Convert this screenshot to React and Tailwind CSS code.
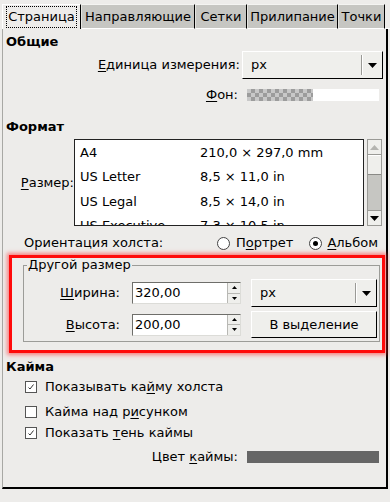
import React from "react";

const font = { fontFamily: '"DejaVu Sans", "Liberation Sans", sans-serif' };

const U = ({ children }) => <span className="underline underline-offset-[2px] decoration-1">{children}</span>;

const Arrow = ({ up, color = "#000" }) => (
  <svg width="9" height="5" viewBox="0 0 9 5">
    <polygon points={up ? "0,5 9,5 4.5,0" : "0,0 9,0 4.5,5"} fill={color} />
  </svg>
);

const Combo = ({ children, w, h = 28 }) => (
  <div
    className={`flex items-center bg-[#efefec] border border-t-white border-l-white border-r-black border-b-black ${w}`}
    style={{ height: h }}
  >
    <span className="pl-[8px] flex-1">{children}</span>
    <div className="h-[20px] w-[2px] border-l border-l-[#9a9a96] border-r border-r-white" />
    <div className="px-[5px] flex items-center">
      <Arrow />
    </div>
  </div>
);

const Spin = ({ value }) => (
  <div className="flex h-[22px] w-[109px] bg-white border border-t-[#6e6e6a] border-l-[#6e6e6a] border-r-[#dcdcd8] border-b-[#dcdcd8]">
    <span className="flex-1 pl-[2px] leading-[20px]">{value}</span>
    <div className="w-[13px] flex flex-col bg-[#efefec] border-l border-l-[#b8b8b4]">
      <div className="flex-1 flex items-center justify-center border-b border-b-[#b8b8b4]">
        <svg width="5" height="3" viewBox="0 0 5 3"><polygon points="0,3 5,3 2.5,0" fill="#000" /></svg>
      </div>
      <div className="flex-1 flex items-center justify-center">
        <svg width="5" height="3" viewBox="0 0 5 3"><polygon points="0,0 5,0 2.5,3" fill="#000" /></svg>
      </div>
    </div>
  </div>
);

const Check = ({ checked }) => (
  <div className="w-[12px] h-[12px] bg-white border border-[#555] flex items-center justify-center">
    {checked && (
      <svg width="8" height="8" viewBox="0 0 8 8">
        <path d="M1.5 4.5 L3 6 L6.5 1.5" stroke="#333" strokeWidth="1" fill="none" />
      </svg>
    )}
  </div>
);

const Radio = ({ on }) => (
  <div className="w-[13px] h-[13px] rounded-full bg-white border border-[#444] flex items-center justify-center">
    {on && <div className="w-[5px] h-[5px] rounded-full bg-black" />}
  </div>
);

const tabs = ["Направляющие", "Сетки", "Прилипание", "Точки"];
const tabW = ["w-[114px]", "w-[52px]", "w-[91px]", "w-[47px]"];

const sizes = [
  ["A4", "210,0 × 297,0 mm"],
  ["US Letter", "8,5 × 11,0 in"],
  ["US Legal", "8,5 × 14,0 in"],
  ["US Executive", "7,3 × 10,5 in"],
];

export default function App() {
  return (
    <div className="w-[390px] h-[502px] bg-[#edecea] text-black text-[13px] pt-[4px] pl-[2px] overflow-hidden" style={font}>
      {/* tabs */}
      <div className="flex h-[25px] items-stretch">
        <div className="w-[79px] bg-[#edecea] border-l border-t border-l-white border-t-white border-r border-r-black flex items-center justify-center">
          <span className="border border-dotted border-black px-[1px] leading-[20px]">Страница</span>
        </div>
        {tabs.map((t, i) => (
          <div
            key={t}
            className={`${tabW[i]} bg-[#c6c6c2] border-t border-t-[#f4f4f2] border-l border-l-[#e4e4e0] border-r border-r-black border-b border-b-white flex items-center justify-center`}
          >
            {t}
          </div>
        ))}
        <div className="flex-1 border-b border-b-white" />
      </div>

      {/* panel */}
      <div className="w-[386px] h-[460px] border-l border-l-[#a8a8a4] border-r-2 border-r-black border-b-2 border-b-black flex flex-col">
        <div className="mt-[5px] h-[16px] leading-[16px] pl-[3px] font-bold">Общие</div>

        <div className="mt-[1px] h-[28px] flex items-center">
          <span className="w-[237px] text-right"><U>Е</U>диница измерения:</span>
          <div className="ml-[2px]">
            <Combo w="w-[141px]">px</Combo>
          </div>
        </div>

        <div className="mt-[9px] h-[14px] flex items-center">
          <span className="w-[235px] text-right"><U>Ф</U>он:</span>
          <div className="ml-[9px] flex h-[12px]">
            <div
              className="w-[66px] h-[12px]"
              style={{
                backgroundColor: "#c8c8c8",
                backgroundImage:
                  "linear-gradient(45deg,#9c9c9c 25%,transparent 25%,transparent 75%,#9c9c9c 75%),linear-gradient(45deg,#9c9c9c 25%,transparent 25%,transparent 75%,#9c9c9c 75%)",
                backgroundSize: "8px 8px",
                backgroundPosition: "0 0,4px 4px",
              }}
            />
            <div className="w-[66px] h-[12px] bg-white" />
          </div>
        </div>

        <div className="mt-[17px] h-[16px] leading-[16px] pl-[3px] font-bold">Формат</div>

        <div className="mt-[4px] h-[87px] flex items-center">
          <span className="w-[71px] text-right"><U>Р</U>азмер:</span>
          <div className="w-[290px] h-[87px] bg-white border border-[#222] overflow-hidden">
            {sizes.map(([a, b]) => (
              <div key={a} className="h-[24.5px] flex items-center pl-[5px] shrink-0">
                <span className="w-[120px]">{a}</span>
                <span>{b}</span>
              </div>
            ))}
          </div>
          <div className="ml-[3px] w-[15px] h-[87px] bg-[#c6c6c2] border border-[#9a9a96] flex flex-col">
            <div className="h-[15px] bg-[#efefec] border-b border-b-[#9a9a96] flex items-center justify-center">
              <Arrow up color="#b4b4b0" />
            </div>
            <div className="h-[20px] bg-[#efefec] border-b border-b-[#8a8a86] border-t border-t-white" />
            <div className="flex-1" />
            <div className="h-[15px] bg-[#efefec] border-t border-t-[#9a9a96] flex items-center justify-center">
              <Arrow />
            </div>
          </div>
        </div>

        <div className="mt-[9px] h-[16px] flex items-center">
          <span className="ml-[21px] w-[193px]">Ориентация холста:</span>
          <Radio />
          <span className="ml-[6px]">П<U>о</U>ртрет</span>
          <div className="ml-[16px]"><Radio on /></div>
          <span className="ml-[5px]"><U>А</U>льбом</span>
        </div>

        {/* highlighted box */}
        <div className="mt-[4px] ml-[6px] w-[376px] h-[98px] border-[3px] border-[#ff0a0a] shadow-[0_0_4px_2px_rgba(255,40,40,0.55)]">
          <fieldset className="ml-[11px] w-[357px] border border-[#9c9c98] pb-[3px]">
            <legend className="ml-[3px] px-[1px] leading-[14px]">Другой размер</legend>
            <div className="mt-[7px] h-[28px] flex items-center">
              <span className="w-[96px] text-right"><U>Ш</U>ирина:</span>
              <div className="ml-[12px]"><Spin value="320,00" /></div>
              <div className="ml-[10px]"><Combo w="w-[126px]">px</Combo></div>
            </div>
            <div className="mt-[4px] h-[27px] flex items-center">
              <span className="w-[96px] text-right"><U>В</U>ысота:</span>
              <div className="ml-[12px]"><Spin value="200,00" /></div>
              <div className="ml-[10px] w-[126px] h-[27px] bg-[#efefec] border border-t-white border-l-white border-r-black border-b-black flex items-center justify-center">
                В выделение
              </div>
            </div>
          </fieldset>
        </div>

        <div className="mt-[6px] h-[16px] leading-[16px] pl-[3px] font-bold">Кайма</div>

        <div className="mt-[4px] h-[16px] flex items-center pl-[22px] gap-[8px]">
          <Check checked />
          <span>Показывать ка<U>й</U>му холста</span>
        </div>
        <div className="mt-[9px] h-[16px] flex items-center pl-[22px] gap-[8px]">
          <Check />
          <span>Кайма над р<U>и</U>сунком</span>
        </div>
        <div className="mt-[5px] h-[16px] flex items-center pl-[22px] gap-[8px]">
          <Check checked />
          <span>Показать <U>т</U>ень каймы</span>
        </div>

        <div className="mt-[8px] h-[16px] flex items-center">
          <span className="w-[235px] text-right">Цвет <U>к</U>аймы:</span>
          <div className="ml-[9px] w-[132px] h-[12px] bg-[#666666]" />
        </div>
      </div>
    </div>
  );
}
